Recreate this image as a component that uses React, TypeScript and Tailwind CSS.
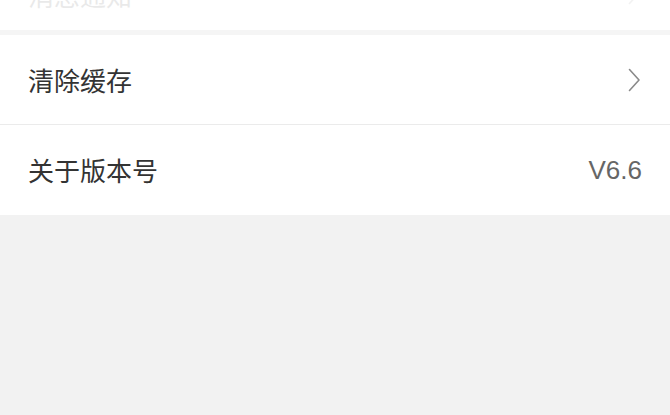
import React from "react";

const Chevron = () => (
  <svg width="13" height="24" viewBox="0 0 13 24" fill="none">
    <path d="M1.5 1.5 L11 12 L1.5 22.5" stroke="#8a8a8a" strokeWidth="1.6" strokeLinecap="round" strokeLinejoin="round" />
  </svg>
);

export default function App() {
  const font = { fontFamily: '"Noto Sans CJK SC", "Liberation Sans", sans-serif' };
  return (
    <div className="w-[670px] h-[415px] bg-[#f2f2f2] overflow-hidden flex flex-col" style={font}>
      <div className="h-[30px] bg-white overflow-hidden flex items-start justify-between pl-[28px] pr-[29px]">
        <span className="text-[26px] leading-[26px] -mt-[18px] text-[#333] opacity-[0.1]">消息通知</span>
        <div className="-mt-[19px] opacity-[0.1]">
          <Chevron />
        </div>
      </div>
      <div className="h-[5px] bg-[#f5f5f5]" />
      <div className="bg-white">
        <div className="h-[89px] flex items-center justify-between pl-[28px] pr-[29px]">
          <span className="text-[26px] leading-none text-[#333]">清除缓存</span>
          <Chevron />
        </div>
        <div className="h-[1px] bg-[#ebebeb]" />
        <div className="h-[90px] flex items-center justify-between pl-[28px] pr-[28px]">
          <span className="text-[26px] leading-none text-[#333]">关于版本号</span>
          <span className="text-[26px] leading-none text-[#666]" style={{ fontFamily: '"Liberation Sans", sans-serif' }}>V6.6</span>
        </div>
      </div>
    </div>
  );
}
